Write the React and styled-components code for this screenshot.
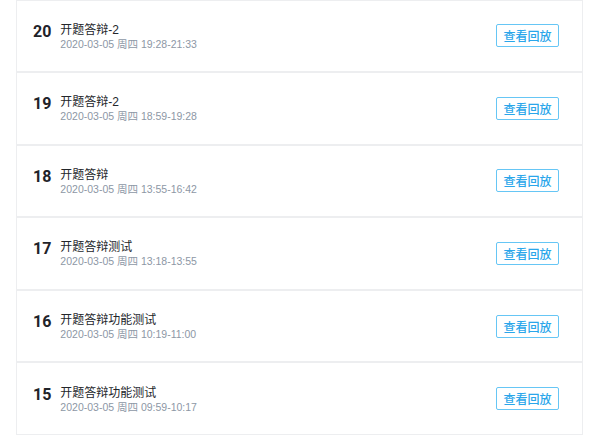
import React from "react";
import styled, { createGlobalStyle } from "styled-components";

const Global = createGlobalStyle`
  html, body { margin: 0; padding: 0; background: #ffffff; }
  body { font-family: "Liberation Sans", "Noto Sans CJK SC", sans-serif; }
`;

const Page = styled.div`
  width: 600px;
  height: 437px;
  overflow: hidden;
  background: #ffffff;
  padding: 0 17px 0 16px;
  box-sizing: border-box;
`;

const List = styled.div`
  display: flex;
  flex-direction: column;
  margin-top: -0.5px;
`;

const Card = styled.div`
  display: flex;
  align-items: center;
  justify-content: space-between;
  height: 72.6px;
  box-sizing: border-box;
  border: 1px solid #edeef0;
  background: #ffffff;
  padding: 0 23px 0 16px;
`;

const Left = styled.div`
  display: flex;
  align-items: flex-start;
  gap: 9px;
  padding-top: 1.5px;
`;

const Num = styled.div`
  font-family: Roboto, "Liberation Sans", sans-serif;
  font-size: 16px;
  font-weight: 700;
  color: #1f2329;
  line-height: 16px;
  padding-top: 1px;
`;

const Info = styled.div`
  display: flex;
  flex-direction: column;
`;

const Title = styled.div`
  font-size: 12px;
  line-height: 14px;
  color: #23262b;
`;

const DateText = styled.div`
  font-size: 10.5px;
  line-height: 14px;
  color: #8d97a5;
`;

const Button = styled.button`
  width: 63px;
  height: 23px;
  box-sizing: border-box;
  border: 1px solid #66c6f5;
  border-radius: 2px;
  background: #ffffff;
  color: #2aa6ea;
  font-size: 12px;
  font-weight: 500;
  font-family: "Noto Sans CJK SC", sans-serif;
  padding: 0;
  line-height: 21px;
  cursor: pointer;
`;

const items = [
  { n: 20, title: "开题答辩-2", date: "2020-03-05 周四 19:28-21:33" },
  { n: 19, title: "开题答辩-2", date: "2020-03-05 周四 18:59-19:28" },
  { n: 18, title: "开题答辩", date: "2020-03-05 周四 13:55-16:42" },
  { n: 17, title: "开题答辩测试", date: "2020-03-05 周四 13:18-13:55" },
  { n: 16, title: "开题答辩功能测试", date: "2020-03-05 周四 10:19-11:00" },
  { n: 15, title: "开题答辩功能测试", date: "2020-03-05 周四 09:59-10:17" },
];

export default function App() {
  return (
    <>
      <Global />
      <Page>
        <List>
          {items.map((it) => (
            <Card key={it.n}>
              <Left>
                <Num>{it.n}</Num>
                <Info>
                  <Title>{it.title}</Title>
                  <DateText>{it.date}</DateText>
                </Info>
              </Left>
              <Button>查看回放</Button>
            </Card>
          ))}
        </List>
      </Page>
    </>
  );
}
